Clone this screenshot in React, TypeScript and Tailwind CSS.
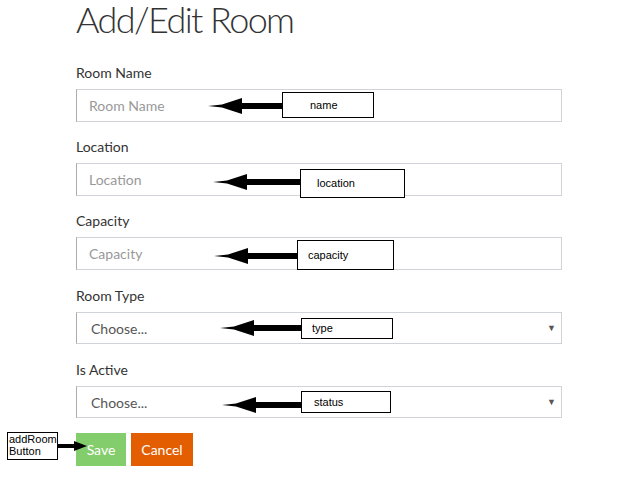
import React from "react";

const font = { fontFamily: '"Segoe UI", Lato, "Open Sans", sans-serif' };
const noteFont = { fontFamily: '"Liberation Sans", Arial, sans-serif' };

function ArrowLeft({ x1, x2, y }: { x1: number; x2: number; y: number }) {
  const len = x2 - x1;
  return (
    <svg
      className="absolute"
      style={{ left: x1, top: y - 9, width: len, height: 18 }}
      viewBox={`0 0 ${len} 18`}
    >
      <polygon
        points={`0,9 14,7.5 34,1 34,6 ${len},6 ${len},12 34,12 34,17 14,10.5`}
        fill="#000"
      />
    </svg>
  );
}

function Note({
  x,
  y,
  w,
  h,
  text,
  pl,
}: {
  x: number;
  y: number;
  w: number;
  h: number;
  text: string;
  pl: number;
}) {
  return (
    <div
      className="absolute flex items-center border border-black bg-white text-[11px] text-black"
      style={{ left: x, top: y, width: w, height: h, paddingLeft: pl, ...noteFont }}
    >
      <span className="leading-none">{text}</span>
    </div>
  );
}

function Label({ children }: { children: React.ReactNode }) {
  return <div className="mb-[6px] h-5 text-[14px] leading-5 text-[#333]">{children}</div>;
}

function Field({ label, placeholder }: { label: string; placeholder: string }) {
  return (
    <div className="flex flex-col">
      <Label>{label}</Label>
      <div className="flex h-[33px] items-center border border-[#d0d3d8] border-l-[#a9acb0] pl-3 text-[14px] text-[#999]">
        {placeholder}
      </div>
    </div>
  );
}

function SelectField({ label }: { label: string }) {
  return (
    <div className="flex flex-col">
      <Label>{label}</Label>
      <div className="flex h-[32px] items-center justify-between border border-[#d0d3d8] border-l-[#a9acb0] pl-[14px] pr-[5px] text-[14px] text-[#555]">
        <span>Choose...</span>
        <span className="text-[9px] text-[#555]">▼</span>
      </div>
    </div>
  );
}

export default function App() {
  return (
    <div className="relative h-[482px] w-[621px] overflow-hidden bg-white" style={font}>
      <div className="ml-[76px] flex w-[486px] flex-col">
        <h1 className="h-[63px] text-[36px] font-light leading-[38px] tracking-[-1.6px] text-[#333]">
          Add/Edit Room
        </h1>
        <div className="flex flex-col gap-[15px]">
          <Field label="Room Name" placeholder="Room Name" />
          <Field label="Location" placeholder="Location" />
          <Field label="Capacity" placeholder="Capacity" />
        </div>
        <div className="mt-4 flex flex-col gap-4">
          <SelectField label="Room Type" />
          <SelectField label="Is Active" />
        </div>
        <div className="mt-[15px] flex gap-[5px]">
          <button className="h-[33px] w-[50px] bg-[#84cd6c] text-[14px] text-white">Save</button>
          <button className="h-[33px] w-[62px] bg-[#e25e00] text-[14px] text-white">Cancel</button>
        </div>
      </div>

      <ArrowLeft x1={208} x2={283} y={106} />
      <Note x={282} y={92} w={92} h={26} text="name" pl={27} />

      <ArrowLeft x1={213} x2={301} y={182} />
      <Note x={300} y={169} w={105} h={29} text="location" pl={16} />

      <ArrowLeft x1={214} x2={298} y={256} />
      <Note x={297} y={240} w={97} h={30} text="capacity" pl={10} />

      <ArrowLeft x1={220} x2={302} y={328} />
      <Note x={301} y={318} w={92} h={21} text="type" pl={10} />

      <ArrowLeft x1={222} x2={302} y={405} />
      <Note x={301} y={391} w={90} h={22} text="status" pl={12} />

      <div
        className="absolute border border-black bg-white px-[1px] text-[11px] leading-[12px] text-black"
        style={{ left: 7, top: 432, width: 51, height: 28, ...noteFont }}
      >
        addRoom
        <br />
        Button
      </div>
      <svg className="absolute" style={{ left: 58, top: 440, width: 29, height: 12 }} viewBox="0 0 29 12">
        <polygon points="0,4 16,4 16,1 29,6 16,11 16,8 0,8" fill="#000" />
      </svg>
    </div>
  );
}
